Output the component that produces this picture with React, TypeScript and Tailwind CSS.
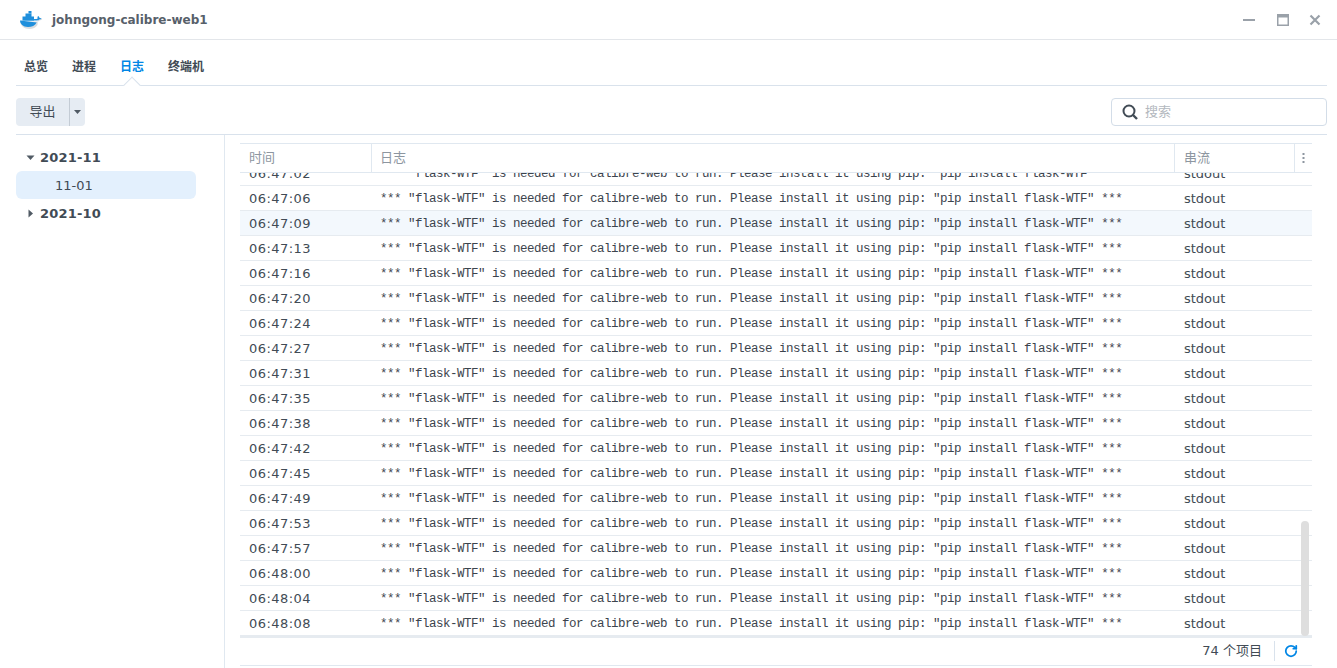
import { RotateCw } from 'lucide-react';

const ui = "font-['DejaVu_Sans','Noto_Sans_CJK_SC',sans-serif]";

const times = [
    '06:47:02', '06:47:06', '06:47:09', '06:47:13', '06:47:16', '06:47:20', '06:47:24',
    '06:47:27', '06:47:31', '06:47:35', '06:47:38', '06:47:42', '06:47:45', '06:47:49',
    '06:47:53', '06:47:57', '06:48:00', '06:48:04', '06:48:08',
];

const message = '*** "flask-WTF" is needed for calibre-web to run. Please install it using pip: "pip install flask-WTF" ***';

function DockerLogo() {
    return (
        <svg width="24" height="20" viewBox="0 0 24 20">
            <path d="M1 11.5h17.5c.9-.1 1.8-.6 2.2-1.3 1 .1 2-.2 2.6-.9-.5-.6-1.3-.9-2.2-.8-.2-1-.8-1.7-1.6-2.2-.7.8-.9 1.9-.5 2.8H19l-.5 6c-1.700 2.600-4.500 3.900-8 3.900-5.500 0-8.600-3-9.500-7.500z" fill="#d9dde1" />
            <path d="M1 10.500h17c.9 0 1.700-.4 2.200-1.100.9 0 1.900-.2 2.400-.8-.5-.5-1.300-.7-2.100-.6-.2-.9-.7-1.500-1.400-2-.6.7-.8 1.700-.4 2.500-.8.4-1.600.5-2.700.5L1 10.500c.2 3.500 3 6.500 8 6.500 4 0 7-1.500 8.700-4.500L1 10.500z" fill="#1f8fdc" />
            <rect x="3.500" y="6.500" width="11.500" height="4" fill="#1f8fdc" />
            <rect x="6.500" y="3.500" width="6" height="3.500" fill="#1f8fdc" />
            <rect x="9.500" y="1" width="3" height="2.500" fill="#1f8fdc" />
        </svg>
    );
}

function Caret({ open }: { open: boolean }) {
    return (
        <svg width="9" height="9" viewBox="0 0 9 9" className="text-[#505a64]">
            {open ? <path d="M0.500 2.500h8l-4 4.500z" fill="currentColor" /> : <path d="M2.500 0.500v8l4.500-4z" fill="currentColor" />}
        </svg>
    );
}

function WindowButtons() {
    return (
        <div className="flex items-center gap-[20px] pr-[16px]">
            <svg width="12" height="12" viewBox="0 0 12 12"><rect x="0" y="5" width="12" height="2" fill="#9aa1a9" /></svg>
            <svg width="12" height="12" viewBox="0 0 12 12" className="ml-[2px]">
                <path d="M0 0h12v12H0zM1.500 3.500v7h9v-7z" fill="#9aa1a9" fillRule="evenodd" />
            </svg>
            <svg width="12" height="12" viewBox="0 0 12 12">
                <path d="M1.500 1.500l9 9M10.500 1.500l-9 9" stroke="#9aa1a9" strokeWidth="2.200" />
            </svg>
        </div>
    );
}

export default function App() {
    return (
        <div className={`${ui} flex h-[668px] flex-col overflow-hidden bg-white text-[#414b55]`}>
            {/* Title bar */}
            <div className="flex h-[40px] shrink-0 items-center justify-between border-b border-[#e3e6ea] pl-[19px]">
                <div className="flex items-center gap-[9px]">
                    <DockerLogo />
                    <span className="text-[12px] font-bold text-[#57606a]">johngong-calibre-web1</span>
                </div>
                <WindowButtons />
            </div>

            {/* Tabs */}
            <div className="ml-[16px] mr-[10px] flex h-[46px] shrink-0 items-center gap-[24px] border-b border-[#d9e2ec] pl-[8px] pt-[9px] text-[12px] font-bold">
                <span>总览</span>
                <span>进程</span>
                <span className="relative text-[#0086e5]">
                    日志
                    <span className="absolute left-[6px] top-[21px] size-[12px] rotate-45 border-l border-t border-[#d9e2ec] bg-white" />
                </span>
                <span>终端机</span>
            </div>

            {/* Toolbar */}
            <div className="ml-[16px] mr-[10px] flex h-[49px] shrink-0 items-start justify-between border-b border-[#d9e2ec] pt-[12px]">
                <div className="flex h-[28px] w-[69px] items-center rounded-[4px] bg-[#e6ecf3] text-[13px]">
                    <span className="w-[53px] text-center">导出</span>
                    <span className="h-full w-px bg-[#c4ccd5]" />
                    <svg width="15" height="6" viewBox="0 0 15 6"><path d="M4 1h7L7.500 5z" fill="#505a64" /></svg>
                </div>
                <div className="flex h-[28px] w-[216px] items-center gap-[7px] rounded-[4px] border border-[#d3dde8] pl-[10px] text-[13px] text-[#b3b8be]">
                    <svg width="16" height="16" viewBox="0 0 16 16">
                        <circle cx="7" cy="7" r="5.500" fill="none" stroke="#414b55" strokeWidth="2" />
                        <path d="M10.500 10.500L15 15" stroke="#414b55" strokeWidth="2.400" />
                    </svg>
                    <span>搜索</span>
                </div>
            </div>

            {/* Main */}
            <div className="ml-[16px] mr-[10px] flex min-h-0 flex-1">
                {/* Date tree */}
                <div className="w-[209px] shrink-0 border-r border-[#e0e8f0] pt-[8px] pr-[28px] text-[13px]">
                    <div className="flex h-[28px] items-center gap-[5px] pl-[10px] font-bold">
                        <Caret open />
                        <span className="pt-[1px] tracking-[0.2px]">2021-11</span>
                    </div>
                    <div className="flex h-[28px] items-center rounded-[6px] bg-[#e3f0fd] pl-[39px] pt-[1px]">11-01</div>
                    <div className="flex h-[28px] items-center gap-[5px] pl-[10px] font-bold">
                        <Caret open={false} />
                        <span className="pt-[1px] tracking-[0.2px]">2021-10</span>
                    </div>
                </div>

                {/* Log table */}
                <div className="ml-[15px] flex w-[1072px] shrink-0 flex-col pt-[8px]">
                    <div className="grid h-[30px] shrink-0 grid-cols-[132px_803px_120px_17px] items-center border-y border-[#e0e8f0] text-[13px] text-[#8d96a0]">
                        <div className="flex h-full items-center border-r border-[#e0e8f0] pl-[9px]">时间</div>
                        <div className="flex h-full items-center border-r border-[#e0e8f0] pl-[8px]">日志</div>
                        <div className="flex h-full items-center border-r border-[#e0e8f0] pl-[9px]">串流</div>
                        <div className="flex h-full items-center justify-center pr-[1px]">
                            <svg width="3" height="11" viewBox="0 0 3 11" fill="#8d96a0">
                                <rect x="0.500" y="0" width="2" height="2" />
                                <rect x="0.500" y="4" width="2" height="2" />
                                <rect x="0.500" y="8" width="2" height="2" />
                            </svg>
                        </div>
                    </div>
                    <div className="relative h-[463px] shrink-0 overflow-hidden">
                        <div className="-mt-[12px]">
                            {times.map((time, index) => (
                                <div
                                    key={time}
                                    className={`grid h-[25px] grid-cols-[132px_803px_1fr] items-center border-b border-[#e6ebf0] pt-[1px] text-[13px] ${index === 2 ? 'bg-[#f3f8fd]' : ''}`}
                                >
                                    <div className="pl-[9px] tracking-[0.45px]">{time}</div>
                                    <div className="whitespace-pre pl-[8px] pt-[1px] font-['Liberation_Mono',monospace] text-[12.5px] tracking-[-0.5px] text-[#3c444d]">{message}</div>
                                    <div className="pl-[9px]">stdout</div>
                                </div>
                            ))}
                        </div>
                        <div className="absolute right-[3px] top-[348px] h-[115px] w-[8px] rounded-[4px] bg-[#dedede]" />
                    </div>
                    <div className="flex h-[30px] shrink-0 items-center justify-end border-y border-t-2 border-t-[#e6ebf0] border-b-[#e0e8f0] pb-[1px] pr-[14px] text-[13px]">
                        <span>74 个项目</span>
                        <span className="ml-[12px] mr-[9px] h-[20px] w-px bg-[#d9e2ec]" />
                        <RotateCw size={14} strokeWidth={3} className="text-[#0086e5]" />
                    </div>
                </div>
            </div>
        </div>
    );
}
